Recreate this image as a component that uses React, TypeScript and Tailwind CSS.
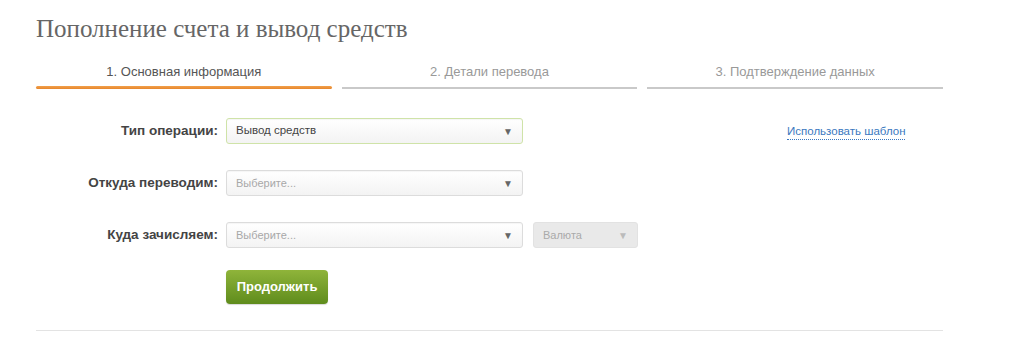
import React from 'react';

const sans = "font-['Liberation_Sans',Arial,sans-serif]";

function Select({ value, placeholder, active, width }: { value?: string; placeholder?: string; active?: boolean; width: string }) {
  return (
    <div
      className={`${width} h-[26px] flex items-center justify-between pl-[9px] pr-[9px] rounded-[3px] border bg-gradient-to-b from-white to-[#f3f3f3] shadow-[inset_0_1px_1px_rgba(0,0,0,0.04)] ${
        active ? 'border-[#cfe3a8]' : 'border-[#dcdcdc]'
      }`}
    >
      <span className={value ? 'text-[11.5px] text-[#444]' : 'text-[11px] text-[#a8a8a8]'}>{value ?? placeholder}</span>
      <span className="text-[10px] text-[#666]">▼</span>
    </div>
  );
}

function Row({ label, children }: { label: string; children: React.ReactNode }) {
  return (
    <div className="flex items-center">
      <div className="w-[190px] text-right pr-[8px] text-[13.5px] font-bold text-[#444] whitespace-nowrap">{label}</div>
      {children}
    </div>
  );
}

export default function App() {
  const tabs = ['1. Основная информация', '2. Детали перевода', '3. Подтверждение данных'];
  return (
    <div className={`w-[1024px] h-[348px] bg-white ${sans}`}>
      <div className="w-[907px] ml-[36px]">
        <h1 className="pt-[14px] font-['Liberation_Serif','Times_New_Roman',serif] text-[25px] leading-[30px] text-[#666]">
          Пополнение счета и вывод средств
        </h1>

        {/* шаги */}
        <div className="mt-[19px] grid grid-cols-3 gap-[10px]">
          {tabs.map((t, i) => (
            <div key={t} className="flex flex-col items-center">
              <div className={`text-[13px] leading-[18px] ${i === 0 ? 'text-[#555]' : 'text-[#999]'}`}>{t}</div>
              <div
                className={`w-full ${
                  i === 0 ? 'mt-[5px] h-[3px] bg-gradient-to-b from-[#f2a04a] to-[#e6862c] rounded-full' : 'mt-[6px] h-[2px] bg-[#c9c9c9]'
                }`}
              />
            </div>
          ))}
        </div>

        {/* форма */}
        <div className="mt-[29px] flex">
          <div className="flex flex-col gap-[26px]">
            <Row label="Тип операции:">
              <Select width="w-[297px]" value="Вывод средств" active />
            </Row>
            <Row label="Откуда переводим:">
              <Select width="w-[297px]" placeholder="Выберите..." />
            </Row>
            <Row label="Куда зачисляем:">
              <Select width="w-[297px]" placeholder="Выберите..." />
              <div className="ml-[10px] w-[105px] h-[26px] flex items-center justify-between px-[9px] rounded-[3px] border border-[#e2e2e2] bg-[#e9e9e9]">
                <span className="text-[11px] text-[#aaa]">Валюта</span>
                <span className="text-[10px] text-[#bbb]">▼</span>
              </div>
            </Row>
            <div className="ml-[190px] -mt-[4px]">
              <button className="w-[102px] h-[34px] rounded-[4px] bg-gradient-to-b from-[#8fb43a] to-[#5f8c1c] text-white text-[13px] font-bold shadow-[0_1px_1px_rgba(0,0,0,0.15)]">
                Продолжить
              </button>
            </div>
          </div>
          <a className="ml-[149px] mt-[6px] h-fit whitespace-nowrap text-[11.5px] text-[#3a78c0] border-b border-dotted border-[#3a78c0] leading-[15px]">
            Использовать шаблон
          </a>
        </div>

        <div className="mt-[26px] h-px bg-[#e3e3e3]" />
      </div>
    </div>
  );
}
